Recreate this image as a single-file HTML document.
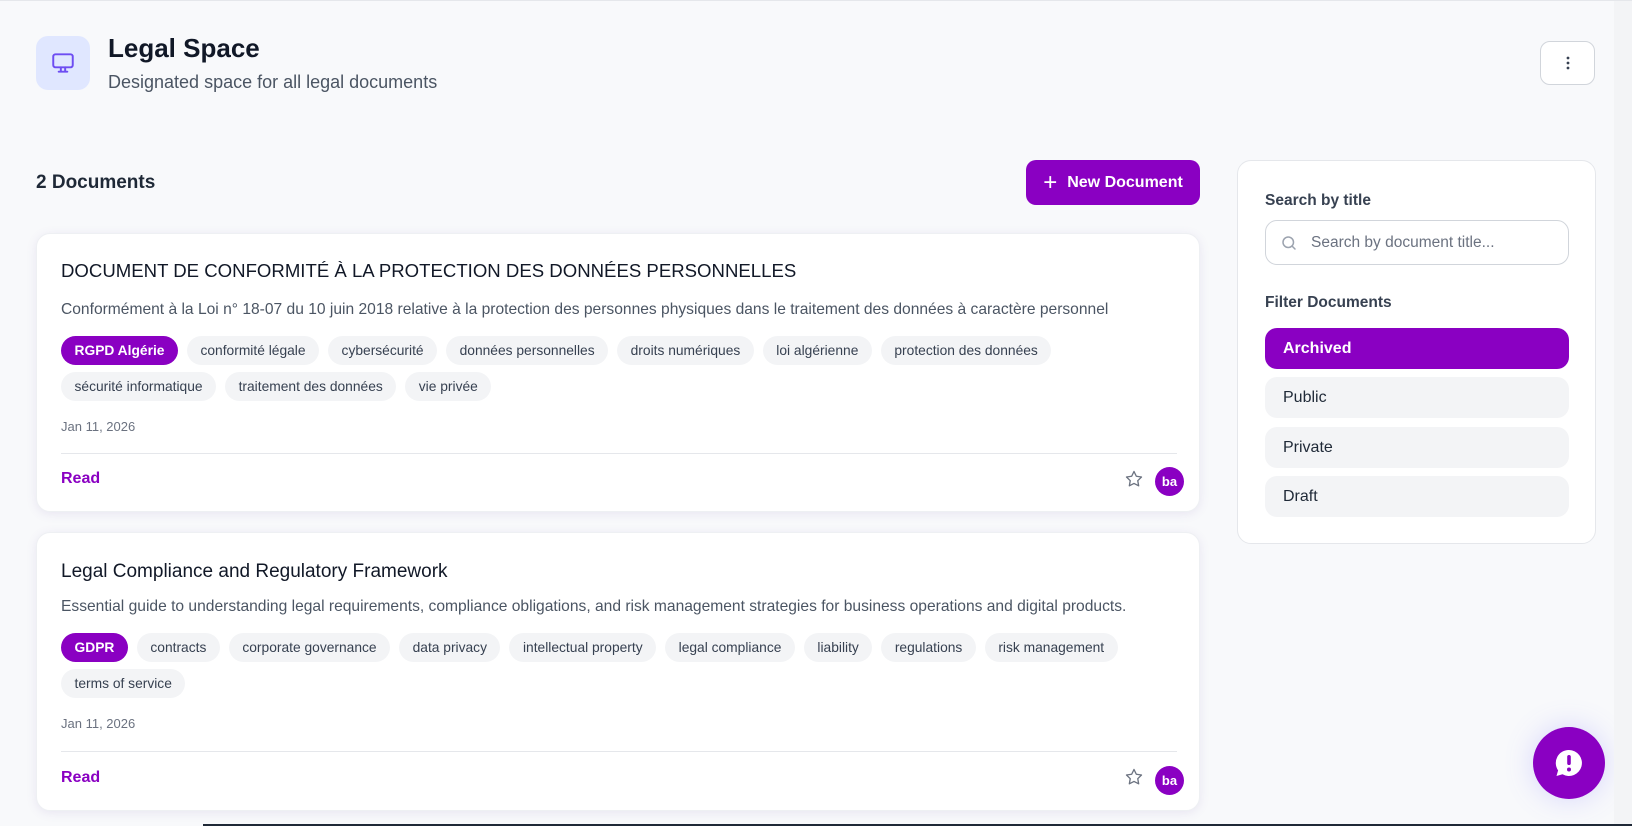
<!DOCTYPE html>
<html><head><meta charset="utf-8"><style>
*{box-sizing:border-box;margin:0;padding:0}
body{width:1632px;height:825px;overflow:hidden;background:#f8f9fb;font-family:"Liberation Sans",sans-serif;color:#111827;position:relative;border-top:1px solid #e5e7eb}
.abs{position:absolute}
.iconbox{left:36px;top:35px;width:54px;height:54px;border-radius:12px;background:#e0e7ff;display:flex;align-items:center;justify-content:center}
h1{position:absolute;left:108px;top:32px;font-size:26px;font-weight:700;color:#111827}
.sub{left:108px;top:71px;font-size:18px;color:#4b5563}
.more{left:1540px;top:40px;width:55px;height:44px;border:1px solid #d1d5db;border-radius:10px;background:#fff;display:flex;align-items:center;justify-content:center}
.count{left:36px;top:171px;font-size:19px;font-weight:700;color:#1f2937}
.newbtn{left:1026px;top:159px;width:174px;height:45px;border-radius:10px;background:#8a00c2;color:#fff;font-size:16px;font-weight:700;display:flex;align-items:center;justify-content:center;gap:10px}
.card{left:36px;width:1164px;background:#fff;border-radius:14px;box-shadow:0 2px 10px rgba(120,90,170,.12);border:1px solid #eef0f3}
.card .t{position:absolute;left:24px;font-size:19px;color:#111827}
.card .d{position:absolute;left:24px;font-size:15.6px;color:#4b5563;white-space:nowrap}
.tags{position:absolute;left:24px;right:20px;display:flex;flex-wrap:wrap;gap:7px 9px}
.tag{height:29px;line-height:29px;padding:0 13.5px;border-radius:15px;background:#f3f4f6;color:#374151;font-size:13.8px;white-space:nowrap}
.tag.p{background:#8a00c2;color:#fff;font-weight:700}
.date{position:absolute;left:24px;font-size:13px;color:#6b7280}
.hr{position:absolute;left:24px;right:22px;height:1px;background:#e5e7eb}
.read{position:absolute;left:24px;font-size:16px;font-weight:700;color:#8a00c2}
.star{position:absolute;right:55px}
.av{position:absolute;right:15px;width:29px;height:29px;border-radius:50%;background:#8a00c2;color:#fff;font-size:13px;font-weight:700;display:flex;align-items:center;justify-content:center}
.side{left:1237px;top:159px;width:359px;height:384px;background:#fff;border:1px solid #e5e7eb;border-radius:14px}
.lbl{position:absolute;left:27px;font-size:15.5px;font-weight:700;color:#374151}
.inp{position:absolute;left:27px;top:59px;width:304px;height:45px;border:1px solid #d1d5db;border-radius:12px;display:flex;align-items:center;padding-left:14px;gap:13px;color:#6b7280;font-size:15.5px}
.f{position:absolute;left:27px;width:304px;height:41px;border-radius:12px;background:#f3f4f6;color:#1f2937;font-size:16px;line-height:41px;padding-left:18px}
.f.on{background:#8a00c2;color:#fff;font-weight:700}
.fab{left:1533px;top:726px;width:72px;height:72px;border-radius:50%;background:#8a00c2;box-shadow:0 0 28px rgba(120,110,255,.25);display:flex;align-items:center;justify-content:center}
</style></head><body>
<div class="abs iconbox"><svg width="26" height="26" viewBox="0 0 24 24" fill="none" stroke="#6d4df2" stroke-width="1.8" stroke-linecap="round" stroke-linejoin="round"><rect x="3" y="4" width="18" height="12" rx="2"/><path d="M8 20h8M10 16v4M14 16v4"/></svg></div>
<h1>Legal Space</h1>
<div class="abs sub">Designated space for all legal documents</div>
<div class="abs more"><svg width="4" height="14" viewBox="0 0 4 14"><circle cx="2" cy="2" r="1.4" fill="#374151"/><circle cx="2" cy="7" r="1.4" fill="#374151"/><circle cx="2" cy="12" r="1.4" fill="#374151"/></svg></div>
<div class="abs count">2 Documents</div>
<div class="abs newbtn"><span style="font-size:24px;font-weight:400;line-height:1">+</span>New Document</div>

<div class="abs card" style="top:232px;height:279px">
  <div class="t" style="top:26px;font-size:18.6px">DOCUMENT DE CONFORMITÉ À LA PROTECTION DES DONNÉES PERSONNELLES</div>
  <div class="d" style="top:67px">Conformément à la Loi n° 18-07 du 10 juin 2018 relative à la protection des personnes physiques dans le traitement des données à caractère personnel</div>
  <div class="tags" style="top:102px"><span class="tag p">RGPD Algérie</span><span class="tag">conformité légale</span><span class="tag">cybersécurité</span><span class="tag">données personnelles</span><span class="tag">droits numériques</span><span class="tag">loi algérienne</span><span class="tag">protection des données</span><span class="tag">sécurité informatique</span><span class="tag">traitement des données</span><span class="tag">vie privée</span></div>
  <div class="date" style="top:185px">Jan 11, 2026</div>
  <div class="hr" style="top:219px"></div>
  <div class="read" style="top:236px">Read</div>
  <svg class="star" style="top:235px" width="20" height="20" viewBox="0 0 24 24" fill="none" stroke="#6b7280" stroke-width="1.6" stroke-linejoin="round"><path d="M12 3l2.8 5.7 6.2.9-4.5 4.4 1.1 6.2L12 17.3 6.4 20.2l1.1-6.2L3 9.6l6.2-.9z"/></svg>
  <div class="av" style="top:233px">ba</div>
</div>

<div class="abs card" style="top:531px;height:279px">
  <div class="t" style="top:28px">Legal Compliance and Regulatory Framework</div>
  <div class="d" style="top:65px">Essential guide to understanding legal requirements, compliance obligations, and risk management strategies for business operations and digital products.</div>
  <div class="tags" style="top:100px"><span class="tag p">GDPR</span><span class="tag">contracts</span><span class="tag">corporate governance</span><span class="tag">data privacy</span><span class="tag">intellectual property</span><span class="tag">legal compliance</span><span class="tag">liability</span><span class="tag">regulations</span><span class="tag">risk management</span><span class="tag">terms of service</span></div>
  <div class="date" style="top:183px">Jan 11, 2026</div>
  <div class="hr" style="top:218px"></div>
  <div class="read" style="top:236px">Read</div>
  <svg class="star" style="top:234px" width="20" height="20" viewBox="0 0 24 24" fill="none" stroke="#6b7280" stroke-width="1.6" stroke-linejoin="round"><path d="M12 3l2.8 5.7 6.2.9-4.5 4.4 1.1 6.2L12 17.3 6.4 20.2l1.1-6.2L3 9.6l6.2-.9z"/></svg>
  <div class="av" style="top:233px">ba</div>
</div>

<div class="abs side">
  <div class="lbl" style="top:31px">Search by title</div>
  <div class="inp"><svg width="18" height="18" viewBox="0 0 24 24" fill="none" stroke="#9ca3af" stroke-width="2" stroke-linecap="round"><circle cx="11" cy="11" r="7"/><path d="M20 20l-4-4"/></svg>Search by document title...</div>
  <div class="lbl" style="top:133px">Filter Documents</div>
  <div class="f on" style="top:167px">Archived</div>
  <div class="f" style="top:216px">Public</div>
  <div class="f" style="top:266px">Private</div>
  <div class="f" style="top:315px">Draft</div>
</div>

<div class="abs fab"><svg width="32" height="32" viewBox="0 0 32 32"><path d="M16 3a13 13 0 1 1-6.5 24.3L3.5 29l1.6-5.6A13 13 0 0 1 16 3z" fill="#fff"/><rect x="14.2" y="8" width="3.6" height="10" rx="1.8" fill="#8a00c2"/><circle cx="16" cy="22.5" r="2" fill="#8a00c2"/></svg></div>
<div class="abs" style="left:1614px;top:0;width:18px;height:825px;background:#f3f4f6"></div>
<div class="abs" style="left:203px;top:823px;width:1429px;height:2px;background:#1f2937"></div>
</body></html>
